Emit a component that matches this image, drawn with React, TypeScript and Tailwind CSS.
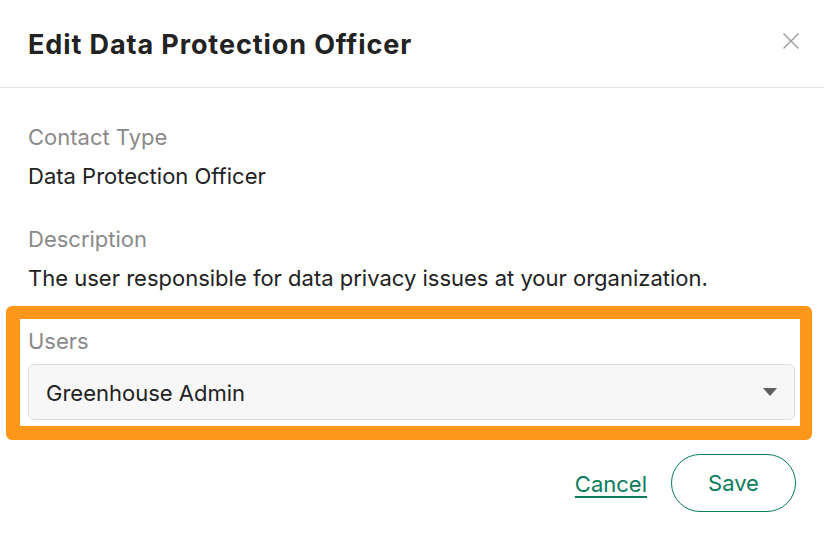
import React from "react";

export default function App() {
  return (
    <div
      className="w-[824px] h-[544px] bg-white text-[#222222] overflow-hidden"
      style={{ fontFamily: "Inter, 'Noto Sans', sans-serif" }}
    >
      <div className="h-[88px] flex items-center justify-between pl-[28px] pr-[24px] border-b border-[#e3e3e3]">
        <h1 className="text-[27px] font-bold tracking-[0.9px] text-[#222222] mt-[3px]">
          Edit Data Protection Officer
        </h1>
        <svg width="18" height="18" viewBox="0 0 18 18" className="-mt-[6px]">
          <path d="M1.5 1.5 L16.5 16.5 M16.5 1.5 L1.5 16.5" stroke="#9a9a9a" strokeWidth="1.4" fill="none" />
        </svg>
      </div>

      <div className="pt-[35px] px-[28px]">
        <div className="text-[22px] leading-[28px] text-[#8a8a8a]">Contact Type</div>
        <div className="mt-[11px] text-[22px] leading-[28px]">Data Protection Officer</div>
        <div className="mt-[35px] text-[22px] leading-[28px] text-[#8a8a8a]">Description</div>
        <div className="mt-[11px] text-[22px] leading-[28px]">
          The user responsible for data privacy issues at your organization.
        </div>
      </div>

      <div className="mt-[14px] ml-[6px] w-[806px] border-[#fd971c] border-t-[13px] border-l-[14px] border-r-[12px] border-b-[14px] rounded-[6px] bg-white">
        <div className="pl-[8px] pr-[5px] pt-[8px] pb-[6px]">
          <div className="text-[22px] leading-[28px] text-[#8a8a8a]">Users</div>
          <div className="mt-[9px] h-[56px] bg-[#f7f7f7] border border-[#e0e0e0] rounded-[6px] flex items-center justify-between pl-[17px] pr-[17px]">
            <span className="text-[22px] text-[#222222] mt-[2px]">Greenhouse Admin</span>
            <svg width="14" height="8" viewBox="0 0 14 8">
              <path d="M0 0 L14 0 L7 8 Z" fill="#5f5f5f" />
            </svg>
          </div>
        </div>
      </div>

      <div className="mt-[14px] flex items-center justify-end pr-[28px] gap-[24px]">
        <a className="text-[22px] text-[#0a7d5c] underline underline-offset-[4px] decoration-[2px] mt-[2px]" href="#">
          Cancel
        </a>
        <button className="w-[125px] h-[58px] rounded-full border border-[#0a7d5c] text-[22px] text-[#0a7d5c] bg-white">
          Save
        </button>
      </div>
    </div>
  );
}
